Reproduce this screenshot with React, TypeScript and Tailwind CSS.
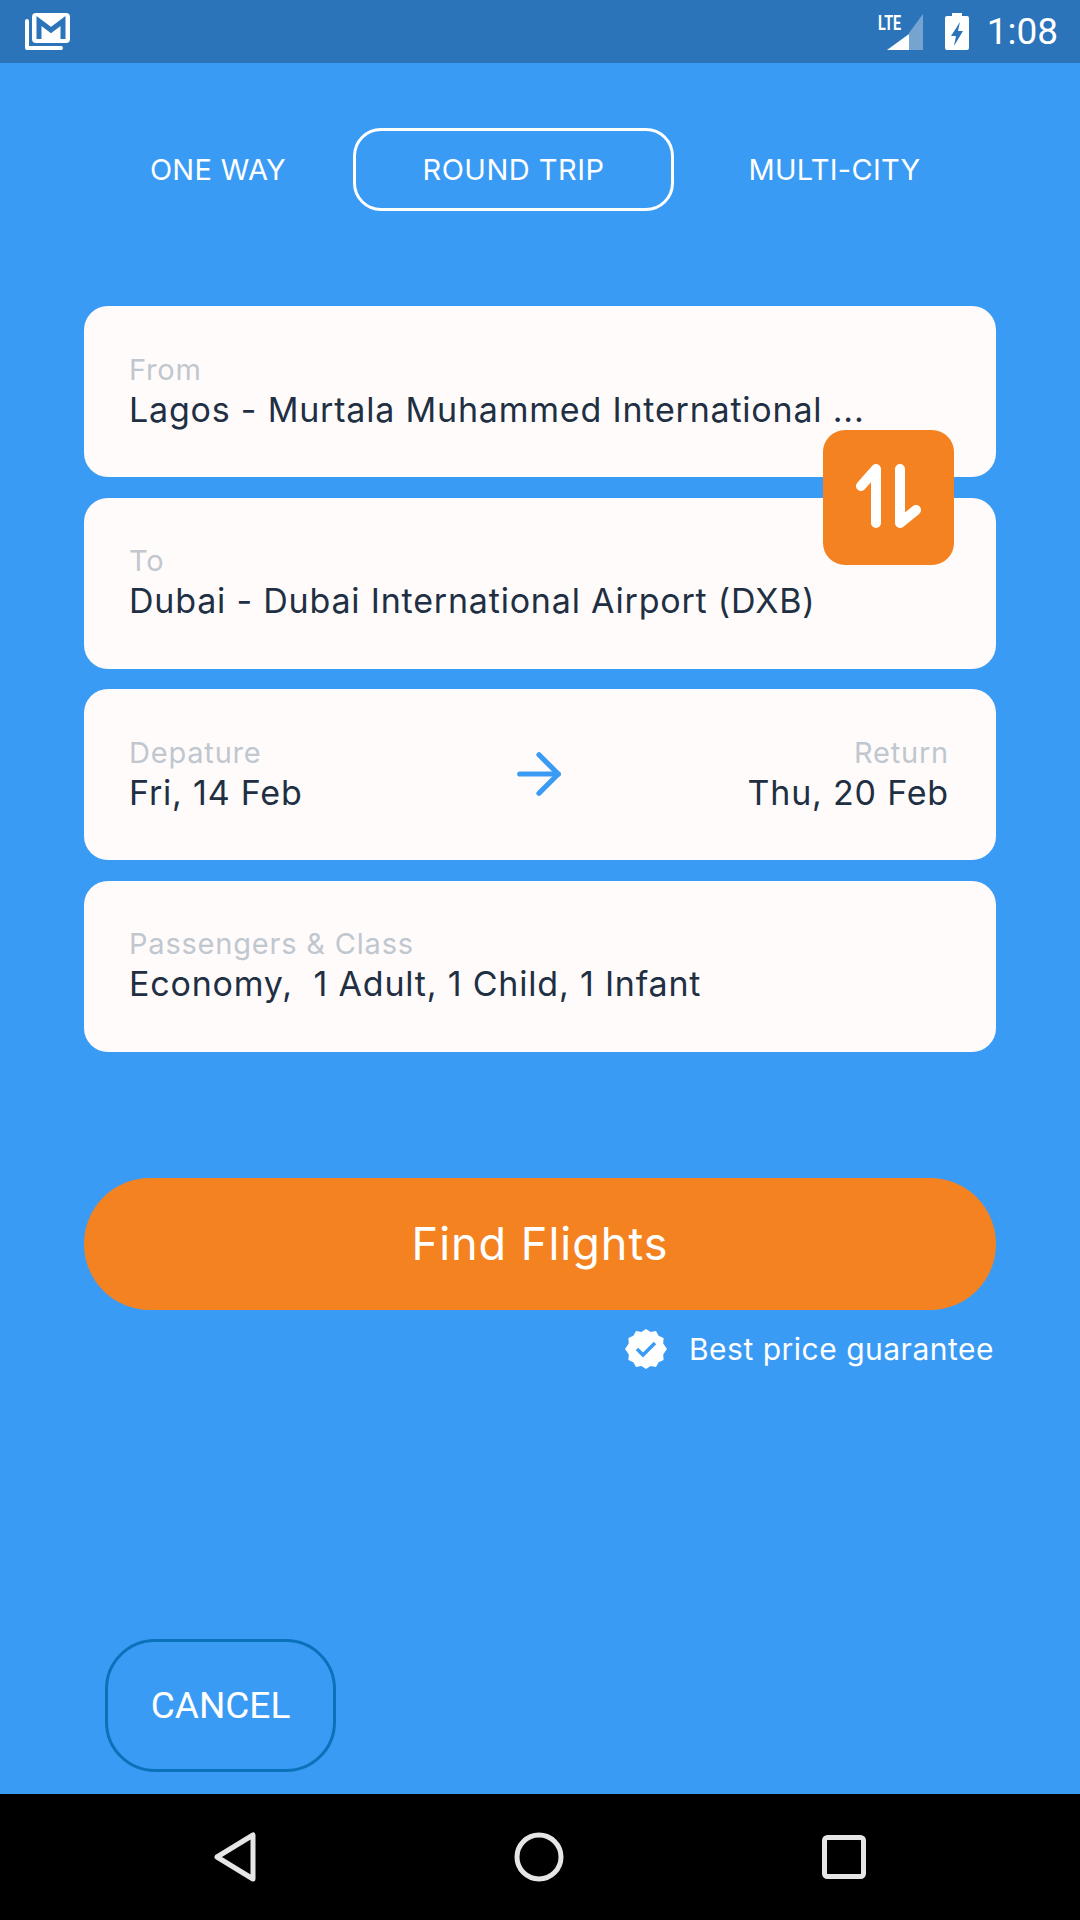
import { ArrowRight } from 'lucide-react';

const InfoCard = ({ label, value }: { label: string; value: string }) => (
  <div className="flex h-[171px] flex-col justify-center rounded-[24px] bg-[#fffbfb] px-[45px] pb-[2px]">
    <p className="text-[29px] leading-[38px] tracking-[0.8px] text-[#c0c7cf]">{label}</p>
    <p className="whitespace-pre text-[34px] leading-[42px] tracking-[0.8px] text-[#212f43]">{value}</p>
  </div>
);

const StatusBar = () => (
  <div className="flex h-[63px] items-center justify-between bg-[#2b74b9] pl-[25px] pr-[22px] text-white">
    <svg width="46" height="38" viewBox="0 0 46 38" fill="none">
      <path d="M2 8V35H36" stroke="white" strokeWidth="4" strokeLinecap="round" strokeLinejoin="round" />
      <rect x="7" y="0" width="38" height="30" rx="4" fill="white" />
      <path d="M14 26V8L26 17L38 8V26" stroke="#2b74b9" strokeWidth="5" fill="none" />
    </svg>
    <div className="flex items-center">
      <div className="relative mr-[22px] h-[36px] w-[36px]">
        <svg width="36" height="36" viewBox="0 0 36 36" className="absolute left-0 top-0">
          <path d="M36 0V36H22V19Z" fill="white" fillOpacity="0.35" />
          <path d="M0 36L22 20V36Z" fill="white" />
        </svg>
        <span className="absolute left-[-9px] top-[-3px] origin-left scale-x-[0.72] font-['Roboto',sans-serif] text-[20px] font-bold leading-[24px]">
          LTE
        </span>
      </div>
      <svg width="24" height="37" viewBox="0 0 24 37" className="mr-[18px]">
        <path
          fillRule="evenodd"
          d="M7 0h10v3h5a2 2 0 0 1 2 2v30a2 2 0 0 1-2 2H2a2 2 0 0 1-2-2V5a2 2 0 0 1 2-2h5ZM15 9L6 23h5l-2 10 9-15h-5l2-9Z"
          fill="white"
        />
      </svg>
      <span className="font-['Roboto',sans-serif] text-[37px] leading-[42px]">1:08</span>
    </div>
  </div>
);

const NavBar = () => (
  <div className="flex h-[126px] items-center justify-center gap-[258px] bg-black">
    <svg width="42" height="50" viewBox="0 0 42 50" fill="none">
      <path d="M39 3V47L3 25Z" stroke="#e6e6e6" strokeWidth="5" strokeLinejoin="round" />
    </svg>
    <svg width="50" height="50" viewBox="0 0 50 50" fill="none">
      <circle cx="25" cy="25" r="22" stroke="#e6e6e6" strokeWidth="5" />
    </svg>
    <svg width="44" height="44" viewBox="0 0 44 44" fill="none">
      <rect x="2.5" y="2.5" width="39" height="39" rx="3" stroke="#e6e6e6" strokeWidth="5" />
    </svg>
  </div>
);

const BadgeCheck = () => (
  <svg width="42" height="40" viewBox="0 0 42 40">
    <path
      d="M21 0l4.600 3 5.400-1 2.600 4.800 5 2.200-.4 5.400L42 20l-3.800 5.600.4 5.400-5 2.200L31 38l-5.400-1L21 40l-4.600-3L11 38l-2.600-4.800-5-2.200.4-5.400L0 20l3.800-5.600-.4-5.400 5-2.200L11 2l5.400 1Z"
      fill="white"
    />
    <path d="M12 20l6 6 12-12" stroke="#3a9bf4" strokeWidth="3.500" fill="none" />
  </svg>
);

export default function App() {
  return (
    <div className="flex h-[1920px] w-[1080px] flex-col bg-[#3a9bf4] font-['Inter',sans-serif]">
      <StatusBar />
      <div className="flex flex-1 flex-col">
        <div className="mt-[65px] flex h-[83px] items-center text-[29px] tracking-[0.3px] text-white">
          <div className="w-[353px] pl-[84px] pr-[1px] text-center">ONE WAY</div>
          <div className="flex h-[83px] w-[321px] items-center justify-center rounded-[28px] border-[3px] border-white tracking-[0.5px]">ROUND TRIP</div>
          <div className="w-[321px] text-center">MULTI-CITY</div>
        </div>

        <div className="relative mx-[84px] mt-[95px] flex flex-col gap-[20.67px]">
          <InfoCard label="From" value="Lagos - Murtala Muhammed International ..." />
          <InfoCard label="To" value="Dubai - Dubai International Airport (DXB)" />
          <div className="grid h-[171px] grid-cols-[1fr_auto_1fr] items-center rounded-[24px] bg-[#fffbfb] pb-[2px] pl-[45px] pr-[47px]">
            <div>
              <p className="text-[29px] leading-[38px] tracking-[0.8px] text-[#c0c7cf]">Depature</p>
              <p className="text-[34px] leading-[42px] tracking-[0.8px] text-[#212f43]">Fri, 14 Feb</p>
            </div>
            <ArrowRight className="h-[66px] w-[66px] text-[#3a9bf4]" strokeWidth={1.9} />
            <div className="text-right">
              <p className="text-[29px] leading-[38px] tracking-[0.8px] text-[#c0c7cf]">Return</p>
              <p className="text-[34px] leading-[42px] tracking-[0.8px] text-[#212f43]">Thu, 20 Feb</p>
            </div>
          </div>
          <InfoCard label="Passengers & Class" value="Economy,  1 Adult, 1 Child, 1 Infant" />

          <div className="absolute left-[739px] top-[124px] flex h-[135px] w-[131px] items-center justify-center rounded-[22px] bg-[#f58220] pb-[4px]">
            <svg width="65" height="64" viewBox="0 0 65 64" fill="none">
              <path d="M5 22L20 5V59M44 5V59L60 46" stroke="white" strokeWidth="10" strokeLinecap="round" strokeLinejoin="round" />
            </svg>
          </div>
        </div>

        <button className="mx-[84px] mt-[126px] h-[132px] rounded-full bg-[#f58220] text-[45px] tracking-[1px] text-white">Find Flights</button>

        <div className="mr-[86px] mt-[19px] flex items-center justify-end gap-[22px]">
          <BadgeCheck />
          <span className="text-[30px] leading-[40px] tracking-[0.5px] text-white">Best price guarantee</span>
        </div>

        <button className="ml-[105px] mt-[270px] h-[133px] w-[231px] rounded-[50px] border-[3px] border-[#0a72b8] font-['Roboto',sans-serif] text-[37px] text-white">
          CANCEL
        </button>
      </div>
      <NavBar />
    </div>
  );
}
